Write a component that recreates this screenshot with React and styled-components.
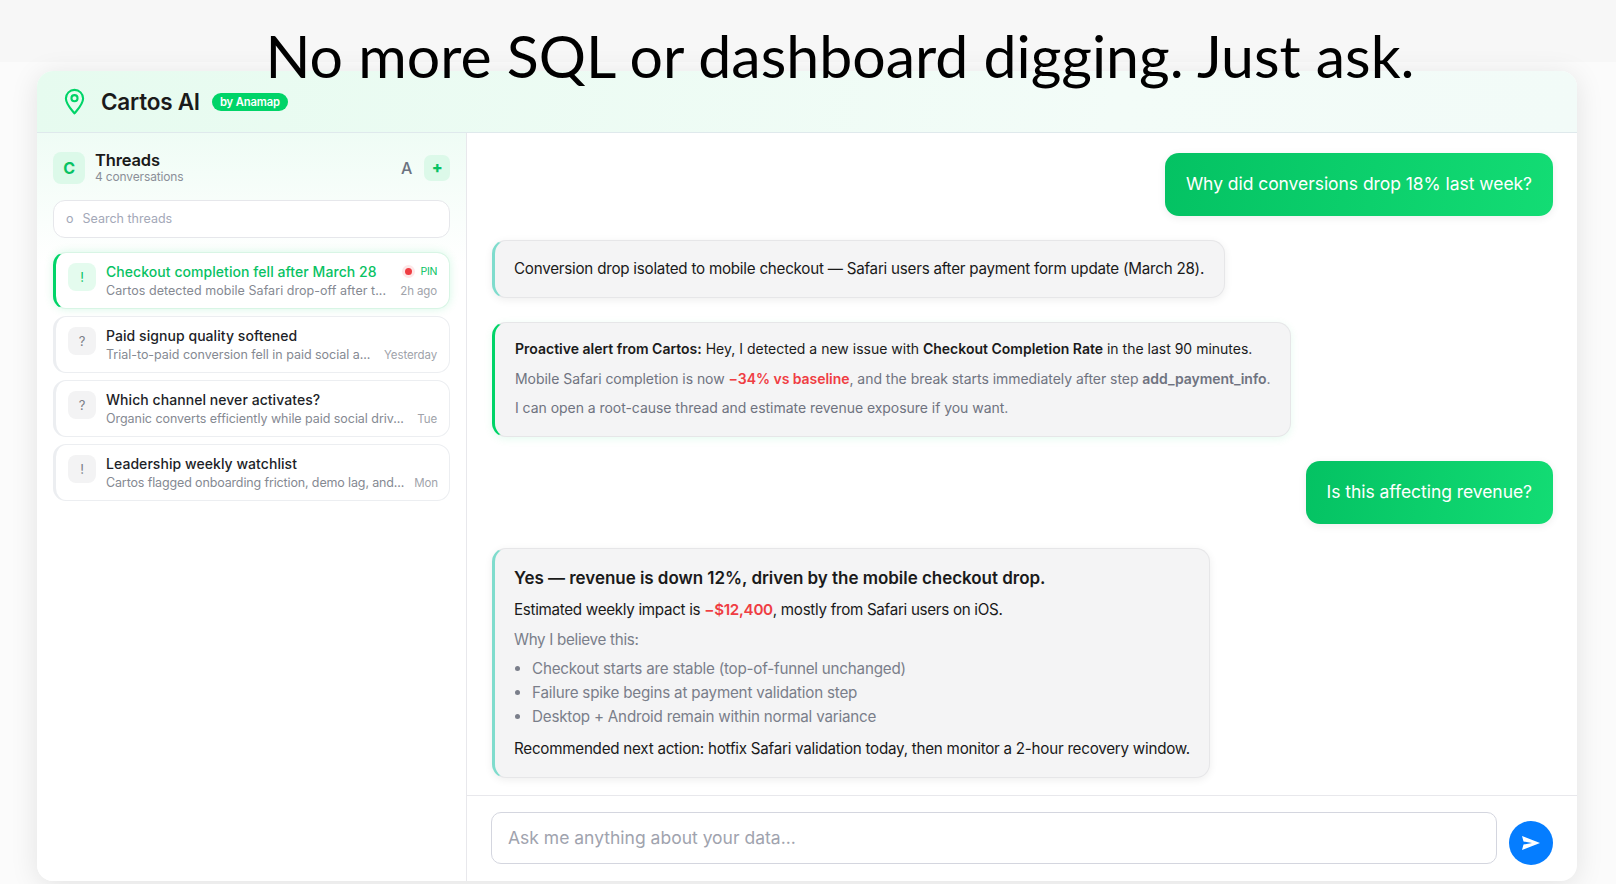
import React from "react";
import styled, { createGlobalStyle } from "styled-components";

const Global = createGlobalStyle`
  * { box-sizing: border-box; }
  html, body { margin: 0; height: 884px; overflow: hidden; background: #f8f8f8; }
  body { font-family: Inter, "Noto Sans", sans-serif; color: #1a1a1a; letter-spacing: -0.02em; }
`;
const Page = styled.div`
  height: 884px; padding: 71px 2px 0 0; display: flex; justify-content: center; position: relative;
  background: linear-gradient(#f7f7f7 0 62px, #fbfbfb 62px);
`;
const Headline = styled.h1`
  position: absolute; top: 20px; left: 64px; right: 0; margin: 0; z-index: 2; text-align: center;
  font: 400 59px/72px Lato, "Open Sans", sans-serif; color: #000; letter-spacing: 0;
`;
const Card = styled.div`
  width: 1540px; height: 810px; background: #fff; border-radius: 16px; display: flex; flex-direction: column;
  overflow: hidden; box-shadow: 0 4px 28px rgba(0,0,0,.1);
`;
const Header = styled.header`
  height: 62px; flex: none; display: flex; align-items: center; padding-left: 27px; gap: 12px;
  background: linear-gradient(100deg, #e6fbef, #f3fcf8 70%, #f2fbf8); border-bottom: 1px solid #dfe9ec;
`;
const Brand = styled.span`font-size: 22.5px; font-weight: 600; margin-left: 4px; letter-spacing: -0.01em;`;
const Badge = styled.span`
  background: #00d468; color: #fff; font-size: 11.2px; font-weight: 600; border-radius: 9px; height: 18px; padding: 0 8px;
  display: flex; align-items: center; letter-spacing: -.01em;
`;
const Body = styled.div`flex: 1; display: flex; min-height: 0;`;
const Sidebar = styled.aside`
  width: 430px; flex: none; border-right: 1px solid #e8e8ec; padding: 19px 16px;
  background: linear-gradient(#effcf5, #fff 130px); display: flex; flex-direction: column;
`;
const SideHead = styled.div`display: flex; align-items: center; height: 32px; gap: 10px;`;
const LetterTile = styled.div`
  width: 32px; height: 32px; border-radius: 8px; background: #dcf9e9; color: #08c263; font-weight: 700; font-size: 16px;
  display: flex; align-items: center; justify-content: center;
`;
const HeadText = styled.div`flex: 1; display: flex; flex-direction: column;`;
const HeadTitle = styled.div`font-size: 16.5px; font-weight: 600; line-height: 17px; letter-spacing: -0.01em;`;
const HeadSub = styled.div`font-size: 12px; color: #8b8f98; line-height: 16px; letter-spacing: -0.012em;`;
const Avatar = styled.span`font-size: 16px; font-weight: 500; color: #6b7280; margin-right: 2px;`;
const Plus = styled.div`
  width: 26px; height: 26px; border-radius: 7px; background: #dcf9e9; color: #08c263; font-weight: 800; font-size: 16px;
  display: flex; align-items: center; justify-content: center; padding-bottom: 2px;
`;
const Search = styled.div`
  margin-top: 16px; height: 38px; border: 1px solid #e6e7eb; border-radius: 12px; background: #fff;
  display: flex; align-items: center; padding: 0 0 1px 12px; gap: 9px; color: #a3a8b8; font-size: 12.5px; letter-spacing: 0;
`;
const Threads = styled.div`margin-top: 14px; display: flex; flex-direction: column; gap: 7px;`;
const Thread = styled.div`
  height: 57px; border-radius: 13px; border: 1px solid ${p => p.$active ? "#d8f5e5" : "#eceef1"};
  border-left: 3px solid ${p => p.$active ? "#00d468" : "#eceef1"}; background: #fff;
  display: flex; align-items: center; padding: 0 12px 0 12px; gap: 10px;
  box-shadow: ${p => p.$active ? "0 0 10px rgba(0,212,104,.16)" : "none"};
`;
const ThreadIcon = styled.div`
  width: 28px; height: 28px; flex: none; border-radius: 8px; margin-bottom: 7px; font-size: 13px;
  background: ${p => p.$active ? "#e4fbee" : "#f3f3f4"}; color: ${p => p.$active ? "#08c263" : "#7b8088"};
  display: flex; align-items: center; justify-content: center;
`;
const ThreadBody = styled.div`flex: 1; min-width: 0; display: flex; flex-direction: column; gap: 2px; margin-top: 1px;`;
const Line = styled.div`display: flex; align-items: center; justify-content: space-between; gap: 10px; height: 17px;`;
const ThreadTitle = styled.div`
  font-size: 14px; font-weight: 500; letter-spacing: 0.004em; white-space: nowrap; color: ${p => p.$active ? "#08c263" : "#1d1f28"};
`;
const Preview = styled.div`
  font-size: 12.5px; color: #858992; white-space: nowrap; letter-spacing: ${p => p.$tracking}em;
`;
const When = styled.div`font-size: 11.5px; color: #a0a3aa; white-space: nowrap; letter-spacing: -0.01em;`;
const Pin = styled.div`display: flex; align-items: center; gap: 9px; font-size: 10.5px; color: #08c263;`;
const Dot = styled.span`width: 7px; height: 7px; border-radius: 50%; background: #ef3d43; box-shadow: 0 0 0 3px #fde7e8;`;
const Main = styled.main`flex: 1; min-width: 0; display: flex; flex-direction: column;`;
const Chat = styled.div`
  flex: 1; padding: 20px 24px 0 25px; display: flex; flex-direction: column; gap: 24px; border-bottom: 1px solid #e8e8ec;
`;
const UserBubble = styled.div`
  align-self: flex-end; height: 63px; padding: 0 21px 2px; display: flex; align-items: center; border-radius: 14px;
  background: linear-gradient(100deg, #04c263, #13dc74); color: #fff; font-size: 17.5px; letter-spacing: -0.003em;
  box-shadow: 0 2px 8px rgba(0,0,0,.07);
`;
const Reply = styled.div`
  align-self: flex-start; background: #f4f4f5; border-radius: 14px; border: 1px solid #e6e6e8;
  border-left: 3px solid ${p => p.$alert ? "#00d468" : "#7fdccd"};
  box-shadow: 0 2px 8px ${p => p.$alert ? "rgba(0,212,104,.1)" : "rgba(0,0,0,.07)"};
  padding: ${p => p.$pad};
`;
const Plain = styled.div`font-size: 15.2px; line-height: 20px; letter-spacing: -0.016em;`;
const AlertLine = styled.div`
  font-size: 14px; line-height: 20px; letter-spacing: ${p => p.$muted ? "-0.003em" : "0"};
  color: ${p => p.$muted ? "#6f7380" : "#1a1a1a"}; margin-top: ${p => p.$mt || 0}px;
`;
const Strong = styled.b`font-weight: 600;`;
const Neg = styled.b`font-weight: 600; color: #ef3d43;`;
const AnswerTitle = styled.div`font-size: 17px; font-weight: 600; line-height: 22px; letter-spacing: -0.002em;`;
const AnswerLine = styled.div`
  font-size: 15.2px; line-height: 20px; letter-spacing: -0.02em; margin-top: ${p => p.$mt}px; color: ${p => p.$muted ? "#7a7e8a" : "#1a1a1a"};
`;
const ActionLine = styled(AnswerLine)`letter-spacing: -0.0165em;`;
const Bullets = styled.ul`
  margin: 7px 0 0; padding: 0 0 0 18px; list-style: disc; color: #7a7e8a; font-size: 15.2px; line-height: 24px; letter-spacing: -0.014em;
`;
const Composer = styled.div`height: 85px; flex: none; display: flex; align-items: center; padding: 0 24px 1px 24px; gap: 12px;`;
const InputBox = styled.div`
  flex: 1; height: 52px; border: 1px solid #d4d6df; border-radius: 10px; display: flex; align-items: center; padding: 0 0 2px 16px;
  color: #a0a3ae; font-size: 17.5px; letter-spacing: 0;
`;
const Send = styled.div`
  width: 44px; height: 44px; border-radius: 50%; background: #057dff; flex: none; margin-top: 9px;
  display: flex; align-items: center; justify-content: center;
`;

const threads = [
  { icon: "!", active: true, title: "Checkout completion fell after March 28", preview: "Cartos detected mobile Safari drop-off after t...", when: "2h ago", pin: true, tracking: 0.004 },
  { icon: "?", title: "Paid signup quality softened", preview: "Trial-to-paid conversion fell in paid social a...", when: "Yesterday", tracking: -0.002 },
  { icon: "?", title: "Which channel never activates?", preview: "Organic converts efficiently while paid social driv...", when: "Tue", tracking: -0.004 },
  { icon: "!", title: "Leadership weekly watchlist", preview: "Cartos flagged onboarding friction, demo lag, and...", when: "Mon", tracking: -0.011 },
];

export default function App() {
  return (
    <>
      <Global />
      <Page>
        <Headline>No more SQL or dashboard digging. Just ask.</Headline>
        <Card>
          <Header>
            <svg width="21" height="27" viewBox="0 0 22 28" fill="none" stroke="#00d468" strokeWidth="2.2">
              <path d="M11 26.5C7 21.5 2 16.5 2 10.8a9 9 0 0 1 18 0C20 16.5 15 21.5 11 26.5Z" strokeLinejoin="round" />
              <circle cx="11" cy="10.5" r="3.2" />
            </svg>
            <Brand>Cartos AI</Brand>
            <Badge>by Anamap</Badge>
          </Header>
          <Body>
            <Sidebar>
              <SideHead>
                <LetterTile>C</LetterTile>
                <HeadText>
                  <HeadTitle>Threads</HeadTitle>
                  <HeadSub>4 conversations</HeadSub>
                </HeadText>
                <Avatar>A</Avatar>
                <Plus>+</Plus>
              </SideHead>
              <Search><span>o</span>Search threads</Search>
              <Threads>
                {threads.map(t => (
                  <Thread key={t.title} $active={t.active}>
                    <ThreadIcon $active={t.active}>{t.icon}</ThreadIcon>
                    <ThreadBody>
                      <Line>
                        <ThreadTitle $active={t.active}>{t.title}</ThreadTitle>
                        {t.pin && <Pin><Dot />PIN</Pin>}
                      </Line>
                      <Line>
                        <Preview $tracking={t.tracking}>{t.preview}</Preview>
                        <When>{t.when}</When>
                      </Line>
                    </ThreadBody>
                  </Thread>
                ))}
              </Threads>
            </Sidebar>
            <Main>
              <Chat>
                <UserBubble>Why did conversions drop 18% last week?</UserBubble>
                <Reply $pad="18px 20px 18px 19px">
                  <Plain>Conversion drop isolated to mobile checkout — Safari users after payment form update (March 28).</Plain>
                </Reply>
                <Reply $alert $pad="16px 20px 18px 20px">
                  <AlertLine><Strong>Proactive alert from Cartos:</Strong> Hey, I detected a new issue with <Strong>Checkout Completion Rate</Strong> in the last 90 minutes.</AlertLine>
                  <AlertLine $muted $mt={10}>Mobile Safari completion is now <Neg>−34% vs baseline</Neg>, and the break starts immediately after step <Strong>add_payment_info</Strong>.</AlertLine>
                  <AlertLine $muted $mt={9}>I can open a root-cause thread and estimate revenue exposure if you want.</AlertLine>
                </Reply>
                <UserBubble>Is this affecting revenue?</UserBubble>
                <Reply $pad="18px 19px 18px 19px">
                  <AnswerTitle>Yes — revenue is down 12%, driven by the mobile checkout drop.</AnswerTitle>
                  <AnswerLine $mt={11}>Estimated weekly impact is <Neg>−$12,400</Neg>, mostly from Safari users on iOS.</AnswerLine>
                  <AnswerLine $muted $mt={10}>Why I believe this:</AnswerLine>
                  <Bullets>
                    <li>Checkout starts are stable (top-of-funnel unchanged)</li>
                    <li>Failure spike begins at payment validation step</li>
                    <li>Desktop + Android remain within normal variance</li>
                  </Bullets>
                  <ActionLine $mt={10}>Recommended next action: hotfix Safari validation today, then monitor a 2-hour recovery window.</ActionLine>
                </Reply>
              </Chat>
              <Composer>
                <InputBox>Ask me anything about your data...</InputBox>
                <Send>
                  <svg width="20" height="16" viewBox="0 0 20 16"><path d="M1 1 19 8 1 15 2.5 9.5 11 8 2.5 6.5Z" fill="#fff" /></svg>
                </Send>
              </Composer>
            </Main>
          </Body>
        </Card>
      </Page>
    </>
  );
}
